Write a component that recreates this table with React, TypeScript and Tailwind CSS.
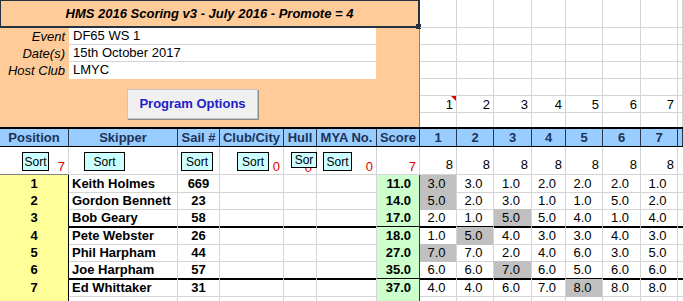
import React from 'react';

// column template shared by the header, sort and result rows
const GRID =
  'grid grid-cols-[69px_109px_42px_64px_33px_60px_43px_37px_37px_38px_34px_37px_38px_37px_1fr]';

interface Entry {
  pos: number;
  name: string;
  sail: number;
  score: string;
  races: string[];
  drop: number;
  thick?: boolean;
}

const entries: Entry[] = [
  { pos: 1, name: 'Keith Holmes', sail: 669, score: '11.0', races: ['3.0', '3.0', '1.0', '2.0', '2.0', '2.0', '1.0'], drop: 0 },
  { pos: 2, name: 'Gordon Bennett', sail: 23, score: '14.0', races: ['5.0', '2.0', '3.0', '1.0', '1.0', '5.0', '2.0'], drop: 0 },
  { pos: 3, name: 'Bob Geary', sail: 58, score: '17.0', races: ['2.0', '1.0', '5.0', '5.0', '4.0', '1.0', '4.0'], drop: 2, thick: true },
  { pos: 4, name: 'Pete Webster', sail: 26, score: '18.0', races: ['1.0', '5.0', '4.0', '3.0', '3.0', '4.0', '3.0'], drop: 1 },
  { pos: 5, name: 'Phil Harpham', sail: 44, score: '27.0', races: ['7.0', '7.0', '2.0', '4.0', '6.0', '3.0', '5.0'], drop: 0 },
  { pos: 6, name: 'Joe Harpham', sail: 57, score: '35.0', races: ['6.0', '6.0', '7.0', '6.0', '5.0', '6.0', '6.0'], drop: 2, thick: true },
  { pos: 7, name: 'Ed Whittaker', sail: 31, score: '37.0', races: ['4.0', '4.0', '6.0', '7.0', '8.0', '8.0', '8.0'], drop: 4 },
];

const headers = ['Position', 'Skipper', 'Sail #', 'Club/City', 'Hull', 'MYA No.', 'Score', '1', '2', '3', '4', '5', '6', '7', ''];

const raceWidths = ['w-[37px]', 'w-[37px]', 'w-[38px]', 'w-[34px]', 'w-[37px]', 'w-[38px]', 'w-[37px]', 'flex-1'];
const topRowHeights = ['h-[28px]', 'h-[17px]', 'h-[17px]', 'h-[17px]', 'h-[17px]', 'h-[17px]', 'h-[14px]'];

const SortButton: React.FC<{ className: string; label?: string }> = ({ className, label = 'Sort' }) => (
  <div
    className={`absolute top-[5px] z-10 flex items-center justify-center overflow-hidden border border-black bg-[#ccffff] text-[12px] leading-none text-black ${className}`}
  >
    {label}
  </div>
);

const InfoRow: React.FC<{ label: string; value: string; last?: boolean }> = ({ label, value, last }) => (
  <div className="flex h-[17px]">
    <div className="w-[69px] pr-[4px] text-right italic leading-[17px]">{label}</div>
    <div className={`w-[307px] bg-white pl-[4px] leading-[16px] ${last ? '' : 'border-b border-[#d4d4d4]'}`}>{value}</div>
  </div>
);

export default function App() {
  return (
    <div className="h-[301px] w-[683px] overflow-hidden bg-white font-['Liberation_Sans',Arial,sans-serif] text-[13px] text-black">
      {/* Top: event panel + blank sheet area */}
      <div className="flex h-[127px]">
        <div className="relative flex w-[420px] flex-col bg-[#ffcc99]">
          <div className="flex h-[28px] items-center justify-center border border-r-2 border-b-2 border-[#243140] font-bold italic">
            HMS 2016 Scoring v3 - July 2016 - Promote = 4
          </div>
          <div className="absolute left-[416px] top-[24px] h-[5px] w-[5px] bg-[#243140]" />
          <div className="flex flex-1 flex-col border-r border-[#808080]">
            <InfoRow label="Event" value="DF65 WS 1" />
            <InfoRow label="Date(s)" value="15th October 2017" />
            <InfoRow label="Host Club" value="LMYC" last />
            <div className="mt-[10px] pl-[127px]">
              <div className="flex h-[30px] w-[131px] items-center justify-center border border-[#c4c4c4] bg-[#f0f0f0] font-bold text-[#2121c8] shadow-[1px_1px_0_#8a8a8a]">
                Program Options
              </div>
            </div>
          </div>
        </div>
        <div className="flex flex-1 flex-col">
          {topRowHeights.map((h, r) => (
            <div key={r} className={`flex ${h}`}>
              {raceWidths.map((w, c) => (
                <div
                  key={c}
                  className={`relative ${w} border-r border-[#d4d4d4] pr-[3px] text-right leading-[17px] ${r < 6 ? 'border-b' : ''}`}
                >
                  {r === 5 && c < 7 ? c + 1 : ''}
                  {r === 5 && c === 0 && (
                    <svg className="absolute right-0 top-0" width="5" height="5" viewBox="0 0 5 5">
                      <polygon points="0,0 5,0 5,5" fill="#e00000" />
                    </svg>
                  )}
                </div>
              ))}
            </div>
          ))}
        </div>
      </div>

      {/* Column headers */}
      <div className={`${GRID} h-[20px] border-t-2 border-b border-black bg-[#99ccff] font-bold text-[#1b3358]`}>
        {headers.map((h, i) => (
          <div key={i} className="border-r border-[#2b3a4d] text-center leading-[17px]">
            {h}
          </div>
        ))}
      </div>

      {/* Sort buttons row */}
      <div className={`${GRID} h-[28px]`}>
        <div className="relative flex items-end justify-end border-r border-b border-[#d4d4d4] border-b-[#808080] pr-[3px] pb-[1px] leading-none text-[#e00000]">
          <SortButton className="left-[22px] h-[19px] w-[27px]" />7
        </div>
        <div className="relative border-r border-b border-[#d4d4d4]">
          <SortButton className="left-[15px] h-[19px] w-[41px]" />
        </div>
        <div className="relative border-r border-b border-[#d4d4d4]">
          <SortButton className="left-[3px] h-[19px] w-[32px]" />
        </div>
        <div className="relative flex items-end justify-end border-r border-b border-[#d4d4d4] pr-[3px] pb-[1px] leading-none text-[#e00000]">
          <SortButton className="left-[17px] h-[19px] w-[32px]" />0
        </div>
        <div className="relative flex items-end justify-end border-r border-b border-[#d4d4d4] pr-[4px] leading-none text-[#e00000]">
          <SortButton className="left-[7px] h-[16px] w-[26px]" label="Sor" />0
        </div>
        <div className="relative flex items-end justify-end border-r border-b border-[#d4d4d4] pr-[3px] pb-[1px] leading-none text-[#e00000]">
          <SortButton className="left-[6px] h-[19px] w-[29px]" />0
        </div>
        <div className="flex items-end justify-end border-r border-b border-[#d4d4d4] pr-[3px] pb-[1px] leading-none text-[#e00000]">
          7
        </div>
        {[0, 1, 2, 3, 4, 5, 6].map((i) => (
          <div key={i} className="flex items-end justify-end border-r border-b border-[#d4d4d4] pr-[3px] pb-[3px] leading-none">
            8
          </div>
        ))}
        <div className="border-b border-[#d4d4d4]" />
      </div>

      {/* Results */}
      {entries.map((e) => {
        const line = e.thick ? 'border-b-2 border-b-black' : 'border-b border-b-[#d4d4d4]';
        return (
          <div key={e.pos} className={`${GRID} ${e.thick ? 'h-[18px]' : 'h-[17px]'} leading-[17px]`}>
            <div className={`border-r border-r-black bg-[#ffff99] text-center font-bold ${e.thick ? 'border-b-2' : 'border-b'} border-b-[#ffff99]`}>
              {e.pos}
            </div>
            <div className={`border-r border-r-[#d4d4d4] pl-[3px] font-bold ${line}`}>{e.name}</div>
            <div className={`border-r border-r-[#d4d4d4] text-center font-bold ${line}`}>{e.sail}</div>
            <div className={`border-r border-r-[#d4d4d4] ${line}`} />
            <div className={`border-r border-r-[#d4d4d4] ${line}`} />
            <div className={`border-r border-r-[#d4d4d4] ${line}`} />
            <div
              className={`border-r border-r-[#3a3a3a] bg-[#ccffcc] pr-[8px] text-right font-bold ${
                e.thick ? 'border-b-2 border-b-black' : 'border-b border-b-[#ccffcc]'
              }`}
            >
              {e.score}
            </div>
            {e.races.map((r, i) => (
              <div
                key={i}
                className={`border-r border-r-[#d4d4d4] pr-[3px] text-center ${
                  i === e.drop ? 'bg-[#c0c0c0]' : ''
                } ${e.thick ? 'border-b-2 border-b-black' : i === e.drop ? 'border-b border-b-[#c0c0c0]' : 'border-b border-b-[#d4d4d4]'}`}
              >
                {r}
              </div>
            ))}
            <div className={line} />
          </div>
        );
      })}
      <div className={`${GRID} h-[17px]`}>
        <div className="border-r border-r-black bg-[#ffff99]" />
        <div className="border-r border-[#d4d4d4]" />
        <div className="border-r border-[#d4d4d4]" />
        <div className="border-r border-[#d4d4d4]" />
        <div className="border-r border-[#d4d4d4]" />
        <div className="border-r border-[#d4d4d4]" />
        <div className="border-r border-r-[#3a3a3a] bg-[#ccffcc]" />
        {[0, 1, 2, 3, 4, 5, 6].map((i) => (
          <div key={i} className="border-r border-[#d4d4d4]" />
        ))}
        <div />
      </div>
    </div>
  );
}
